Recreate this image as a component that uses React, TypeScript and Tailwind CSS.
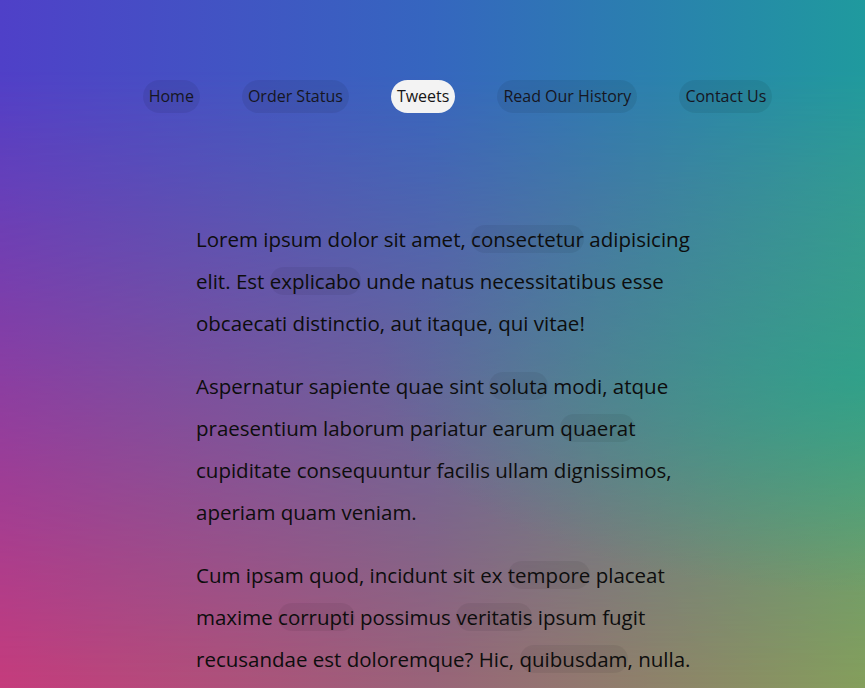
import React from "react";

const links = ["Home", "Order Status", "Tweets", "Read Our History", "Contact Us"];

const Bubble = ({ children }: { children: React.ReactNode }) => (
  <span className="rounded-full bg-black/[0.06]">{children}</span>
);

export default function App() {
  return (
    <div
      className="relative h-screen overflow-hidden bg-[radial-gradient(ellipse_at_100%_55%,rgba(45,170,125,0.75),transparent_40%),linear-gradient(to_right,#c63c7c,#9a6478_50%,#859f5c)]"
      style={{ fontFamily: '"Open Sans", "Noto Sans", sans-serif' }}
    >
      {/* top colour layer faded out towards the bottom */}
      <div className="absolute inset-0 bg-[linear-gradient(to_right,#4f40c8,#3566bf_50%,#1f9a9e)] [mask-image:linear-gradient(to_bottom,black_10%,transparent)]" />

      <div className="relative">
        <nav className="flex justify-center gap-[42px] pl-[50px] pt-[80px]">
          {links.map((l) => (
            <a
              key={l}
              className={
                l === "Tweets"
                  ? "h-[33px] rounded-full bg-[#f3f3f3] px-[6px] text-[16px] leading-[33px] text-[#161616]"
                  : "h-[33px] rounded-full bg-black/[0.07] px-[6px] text-[16px] leading-[33px] text-[#161622]"
              }
            >
              {l}
            </a>
          ))}
        </nav>

        <main className="ml-[196px] mt-[105px] w-[505px] text-[20.5px] leading-[42px] text-[#0d0d0d]">
          <p className="mb-[21px]">
            Lorem ipsum dolor sit amet, <Bubble>consectetur</Bubble> adipisicing elit. Est{" "}
            <Bubble>explicabo</Bubble> unde natus necessitatibus esse obcaecati distinctio, aut
            itaque, qui vitae!
          </p>
          <p className="mb-[21px]">
            Aspernatur sapiente quae sint <Bubble>soluta</Bubble> modi, atque praesentium laborum
            pariatur earum <Bubble>quaerat</Bubble> cupiditate consequuntur facilis ullam
            dignissimos, aperiam quam veniam.
          </p>
          <p className="mb-[21px]">
            Cum ipsam quod, incidunt sit ex <Bubble>tempore</Bubble> placeat maxime{" "}
            <Bubble>corrupti</Bubble> possimus <Bubble>veritatis</Bubble> ipsum fugit recusandae
            est doloremque? Hic, <Bubble>quibusdam</Bubble>, nulla.
          </p>
        </main>
      </div>
    </div>
  );
}
